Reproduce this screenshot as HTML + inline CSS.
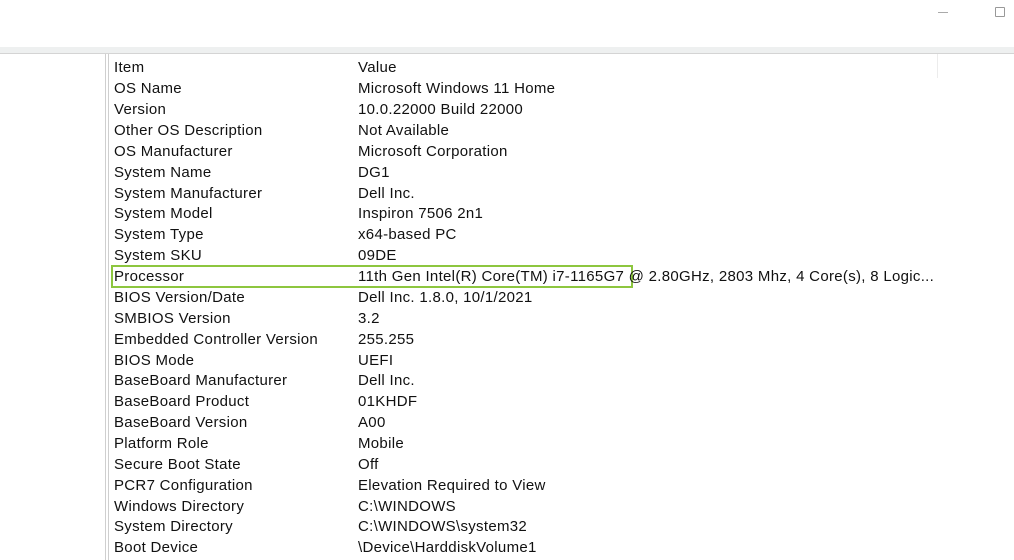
<!DOCTYPE html><html><head><style>
body{margin:0;width:1014px;height:560px;background:#fff;position:relative;overflow:hidden;font-family:"Liberation Sans",sans-serif;font-size:15px;color:#111}
.band{position:absolute;left:0;top:47px;width:1014px;height:6px;background:#eef0f0;border-bottom:1px solid #d4d4d4}
.lp{position:absolute;left:0;top:54px;width:105px;height:506px;border-right:1px solid #cfcfcf}
.rp{position:absolute;left:108px;top:54px;width:906px;height:506px;border-left:1px solid #cfcfcf}
.sep{position:absolute;left:937px;top:54px;width:1px;height:24px;background:#ececec}
.r{position:absolute;left:114px;height:21px;line-height:21px;white-space:nowrap;letter-spacing:0.3px}
.v{position:absolute;left:244px}
.box{position:absolute;left:111px;top:265px;width:518px;height:19px;border:2px solid #8dc63f}
</style></head><body>
<div style="position:absolute;left:938px;top:12px;width:10px;height:1px;background:#aaa"></div>
<div style="position:absolute;left:995px;top:7px;width:8px;height:8px;border:1px solid #999;border-radius:1px"></div>
<div class="band"></div><div class="lp"></div><div class="rp"></div><div class="sep"></div>
<div class="box"></div>
<div id="rows"></div>
<script>
var d=[["Item","Value"],["OS Name","Microsoft Windows 11 Home"],["Version","10.0.22000 Build 22000"],["Other OS Description","Not Available"],["OS Manufacturer","Microsoft Corporation"],["System Name","DG1"],["System Manufacturer","Dell Inc."],["System Model","Inspiron 7506 2n1"],["System Type","x64-based PC"],["System SKU","09DE"],["Processor","11th Gen Intel(R) Core(TM) i7-1165G7 @ 2.80GHz, 2803 Mhz, 4 Core(s), 8 Logic..."],["BIOS Version/Date","Dell Inc. 1.8.0, 10/1/2021"],["SMBIOS Version","3.2"],["Embedded Controller Version","255.255"],["BIOS Mode","UEFI"],["BaseBoard Manufacturer","Dell Inc."],["BaseBoard Product","01KHDF"],["BaseBoard Version","A00"],["Platform Role","Mobile"],["Secure Boot State","Off"],["PCR7 Configuration","Elevation Required to View"],["Windows Directory","C:\\WINDOWS"],["System Directory","C:\\WINDOWS\\system32"],["Boot Device","\\Device\\HarddiskVolume1"]];
var h="";d.forEach(function(r,i){var t=(57.3+i*20.87).toFixed(1);h+='<div class="r" style="top:'+t+'px">'+r[0]+'<span class="v">'+r[1]+'</span></div>';});
document.getElementById("rows").innerHTML=h;
</script>
</body></html>
